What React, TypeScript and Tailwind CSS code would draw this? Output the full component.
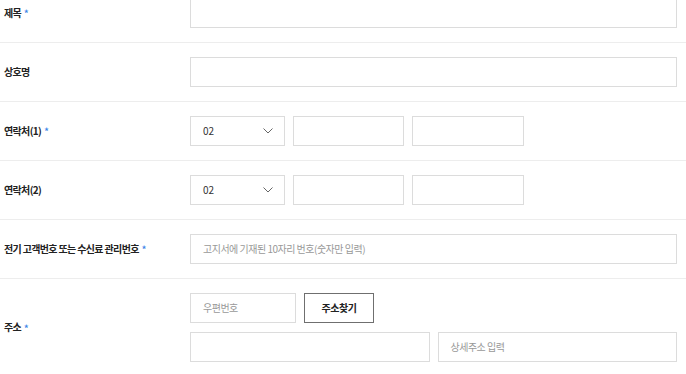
import React from "react";

const Star = () => <span className="ml-[3px] text-[#3d86e8] text-[9px] align-middle tracking-normal">*</span>;

const Label = ({ text, req }: { text: string; req?: boolean }) => (
  <div className="w-[186px] shrink-0 text-[10px] tracking-[-0.065em] font-bold text-[#222] leading-none">
    {text}
    {req && <Star />}
  </div>
);

const Box = ({ w, placeholder, value, children }: { w?: string; placeholder?: string; value?: string; children?: React.ReactNode }) => (
  <div className={`${w ?? "flex-1"} h-[30px] border border-[#dcdcdc] bg-white flex items-center px-3 text-[10px] tracking-[-0.05em] leading-none`}>
    {placeholder && <span className="text-[#999]">{placeholder}</span>}
    {value && <span className="text-[#333]">{value}</span>}
    {children}
  </div>
);

const Select = () => (
  <div className="w-[95px] h-[30px] border border-[#dcdcdc] bg-white flex items-center justify-between pl-3 pr-[11px] text-[10px] leading-none text-[#333]">
    <span>02</span>
    <svg width="10" height="6" viewBox="0 0 10 6" fill="none">
      <polyline points="0.5,0.5 5,5 9.5,0.5" stroke="#666" strokeWidth="1" />
    </svg>
  </div>
);

const Row = ({ children }: { children: React.ReactNode }) => (
  <div className="flex items-center border-b border-[#ededed] py-[14px] pl-[4px] pr-[9px]">{children}</div>
);

export default function App() {
  return (
    <div className="w-[686px] h-[374px] overflow-hidden bg-white font-['Noto_Sans_CJK_KR',sans-serif]">
      <div className="-mt-[16px]">
        <Row>
          <Label text="제목" req />
          <Box />
        </Row>
        <Row>
          <Label text="상호명" />
          <Box />
        </Row>
        <Row>
          <Label text="연락처(1)" req />
          <div className="flex gap-[8px]">
            <Select />
            <Box w="w-[111px]" />
            <Box w="w-[112px]" />
          </div>
        </Row>
        <Row>
          <Label text="연락처(2)" />
          <div className="flex gap-[8px]">
            <Select />
            <Box w="w-[111px]" />
            <Box w="w-[112px]" />
          </div>
        </Row>
        <Row>
          <Label text="전기 고객번호 또는 수신료 관리번호" req />
          <Box placeholder="고지서에 기재된 10자리 번호(숫자만 입력)" />
        </Row>
        <Row>
          <Label text="주소" req />
          <div className="flex-1 flex flex-col gap-[9px]">
            <div className="flex gap-[8px]">
              <Box w="w-[106px]" placeholder="우편번호" />
              <button className="w-[70px] h-[30px] border border-[#6f6f6f] bg-white text-[10px] tracking-[-0.05em] font-bold text-[#222] leading-none">
                주소찾기
              </button>
            </div>
            <div className="flex gap-[8px]">
              <Box />
              <Box placeholder="상세주소 입력" />
            </div>
          </div>
        </Row>
      </div>
    </div>
  );
}
